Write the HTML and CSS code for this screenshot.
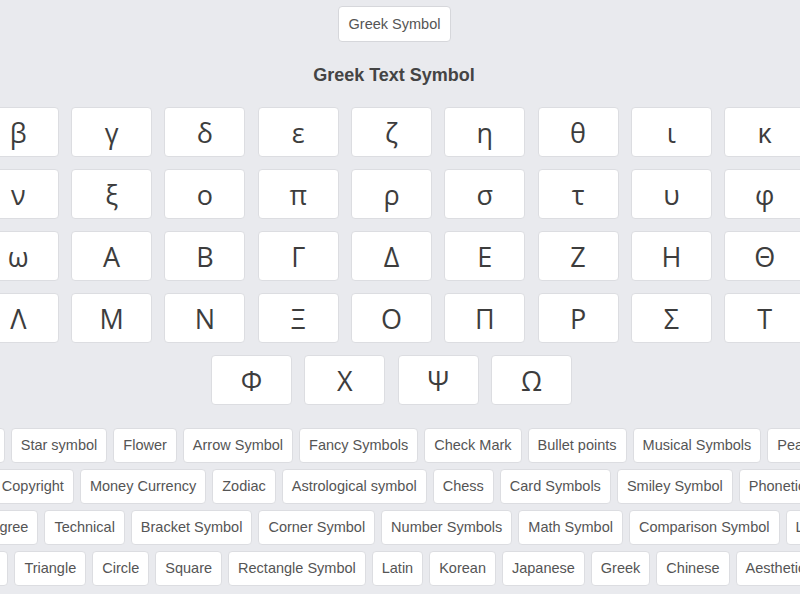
FILE: index.html
```html
<!DOCTYPE html>
<html lang="en">

<head>
    <meta charset="UTF-8">
    <meta name="viewport" content="width=device-width, initial-scale=1.0">
    <title>Greek Text Symbol</title>
    <link rel="stylesheet" href="styles.css">
</head>

<body>
    <div class="page">
        <div class="top">
            <a class="top-btn">Greek Symbol</a>
        </div>
        <h2 class="title">Greek Text Symbol</h2>

        <div class="symbols-wrap">
            <div class="symbols">
                <span class="sym">α</span><span class="sym">β</span><span class="sym">γ</span><span class="sym">δ</span>
                <span class="sym">ε</span><span class="sym">ζ</span><span class="sym">η</span><span class="sym">θ</span>
                <span class="sym">ι</span><span class="sym">κ</span><span class="sym">λ</span><span class="sym">μ</span>
                <span class="sym">ν</span><span class="sym">ξ</span><span class="sym">ο</span><span class="sym">π</span>
                <span class="sym">ρ</span><span class="sym">σ</span><span class="sym">τ</span><span class="sym">υ</span>
                <span class="sym">φ</span><span class="sym">χ</span><span class="sym">ψ</span><span class="sym">ω</span>
                <span class="sym">Α</span><span class="sym">Β</span><span class="sym">Γ</span><span class="sym">Δ</span>
                <span class="sym">Ε</span><span class="sym">Ζ</span><span class="sym">Η</span><span class="sym">Θ</span>
                <span class="sym">Ι</span><span class="sym">Κ</span><span class="sym">Λ</span><span class="sym">Μ</span>
                <span class="sym">Ν</span><span class="sym">Ξ</span><span class="sym">Ο</span><span class="sym">Π</span>
                <span class="sym">Ρ</span><span class="sym">Σ</span><span class="sym">Τ</span><span class="sym">Υ</span>
                <span class="sym">Φ</span><span class="sym">Χ</span><span class="sym">Ψ</span><span class="sym">Ω</span>
            </div>
        </div>

        <div class="links">
            <div class="link-row">
                <a class="link">Heart Symbol</a>
                <a class="link">Star symbol</a>
                <a class="link">Flower</a>
                <a class="link">Arrow Symbol</a>
                <a class="link">Fancy Symbols</a>
                <a class="link">Check Mark</a>
                <a class="link">Bullet points</a>
                <a class="link">Musical Symbols</a>
                <a class="link">Peace Symbols</a>
            </div>
            <div class="link-row">
                <a class="link">Planets</a>
                <a class="link">Copyright</a>
                <a class="link">Money Currency</a>
                <a class="link">Zodiac</a>
                <a class="link">Astrological symbol</a>
                <a class="link">Chess</a>
                <a class="link">Card Symbols</a>
                <a class="link">Smiley Symbol</a>
                <a class="link">Phonetic Symbol</a>
            </div>
            <div class="link-row">
                <a class="link">Arrows</a>
                <a class="link">Degree</a>
                <a class="link">Technical</a>
                <a class="link">Bracket Symbol</a>
                <a class="link">Corner Symbol</a>
                <a class="link">Number Symbols</a>
                <a class="link">Math Symbol</a>
                <a class="link">Comparison Symbol</a>
                <a class="link">Line Symbol</a>
            </div>
            <div class="link-row">
                <a class="link">Pentagram</a>
                <a class="link">Triangle</a>
                <a class="link">Circle</a>
                <a class="link">Square</a>
                <a class="link">Rectangle Symbol</a>
                <a class="link">Latin</a>
                <a class="link">Korean</a>
                <a class="link">Japanese</a>
                <a class="link">Greek</a>
                <a class="link">Chinese</a>
                <a class="link">Aesthetic Symbol</a>
            </div>
        </div>
    </div>
</body>

</html>
```

FILE: styles.css
```css
html,
body {
    margin: 0;
    padding: 0;
    background: #e9eaee;
    overflow: hidden;
}

.page {
    width: 785px;
    font-family: "Liberation Sans", Arial, sans-serif;
    color: #555;
}

.top {
    display: flex;
    justify-content: center;
    padding: 6px 0 0 4px;
}

.top-btn {
    display: block;
    padding: 8px 10px;
    font-size: 14.5px;
    line-height: 18px;
    background: #fff;
    border: 1px solid #d6d7db;
    border-radius: 4px;
    color: #555;
}

.title {
    margin: 22px 0 21px;
    padding-left: 3px;
    font-size: 18px;
    line-height: 22px;
    text-align: center;
    color: #444;
}

.symbols-wrap {
    display: flex;
    justify-content: center;
    padding-right: 2px;
}

.symbols {
    flex-shrink: 0;
    width: 1014px;
    display: flex;
    flex-wrap: wrap;
    justify-content: center;
    gap: 12px 12.3px;
}

.sym {
    box-sizing: border-box;
    width: 81px;
    height: 50px;
    display: flex;
    align-items: center;
    justify-content: center;
    background: #fff;
    border: 1px solid #dcdde1;
    border-radius: 4px;
    font-family: "Open Sans", "DejaVu Sans", sans-serif;
    font-size: 27px;
    color: #3d3d3d;
}

.links {
    margin-top: 23px;
    display: flex;
    flex-direction: column;
    gap: 6px;
}

.link-row {
    display: flex;
    justify-content: center;
    gap: 6px;
}

.link {
    flex-shrink: 0;
    white-space: nowrap;
    padding: 8px 9px;
    font-size: 14.5px;
    line-height: 17px;
    background: #fff;
    border: 1px solid #dcdde1;
    border-radius: 4px;
    color: #555;
}
```
